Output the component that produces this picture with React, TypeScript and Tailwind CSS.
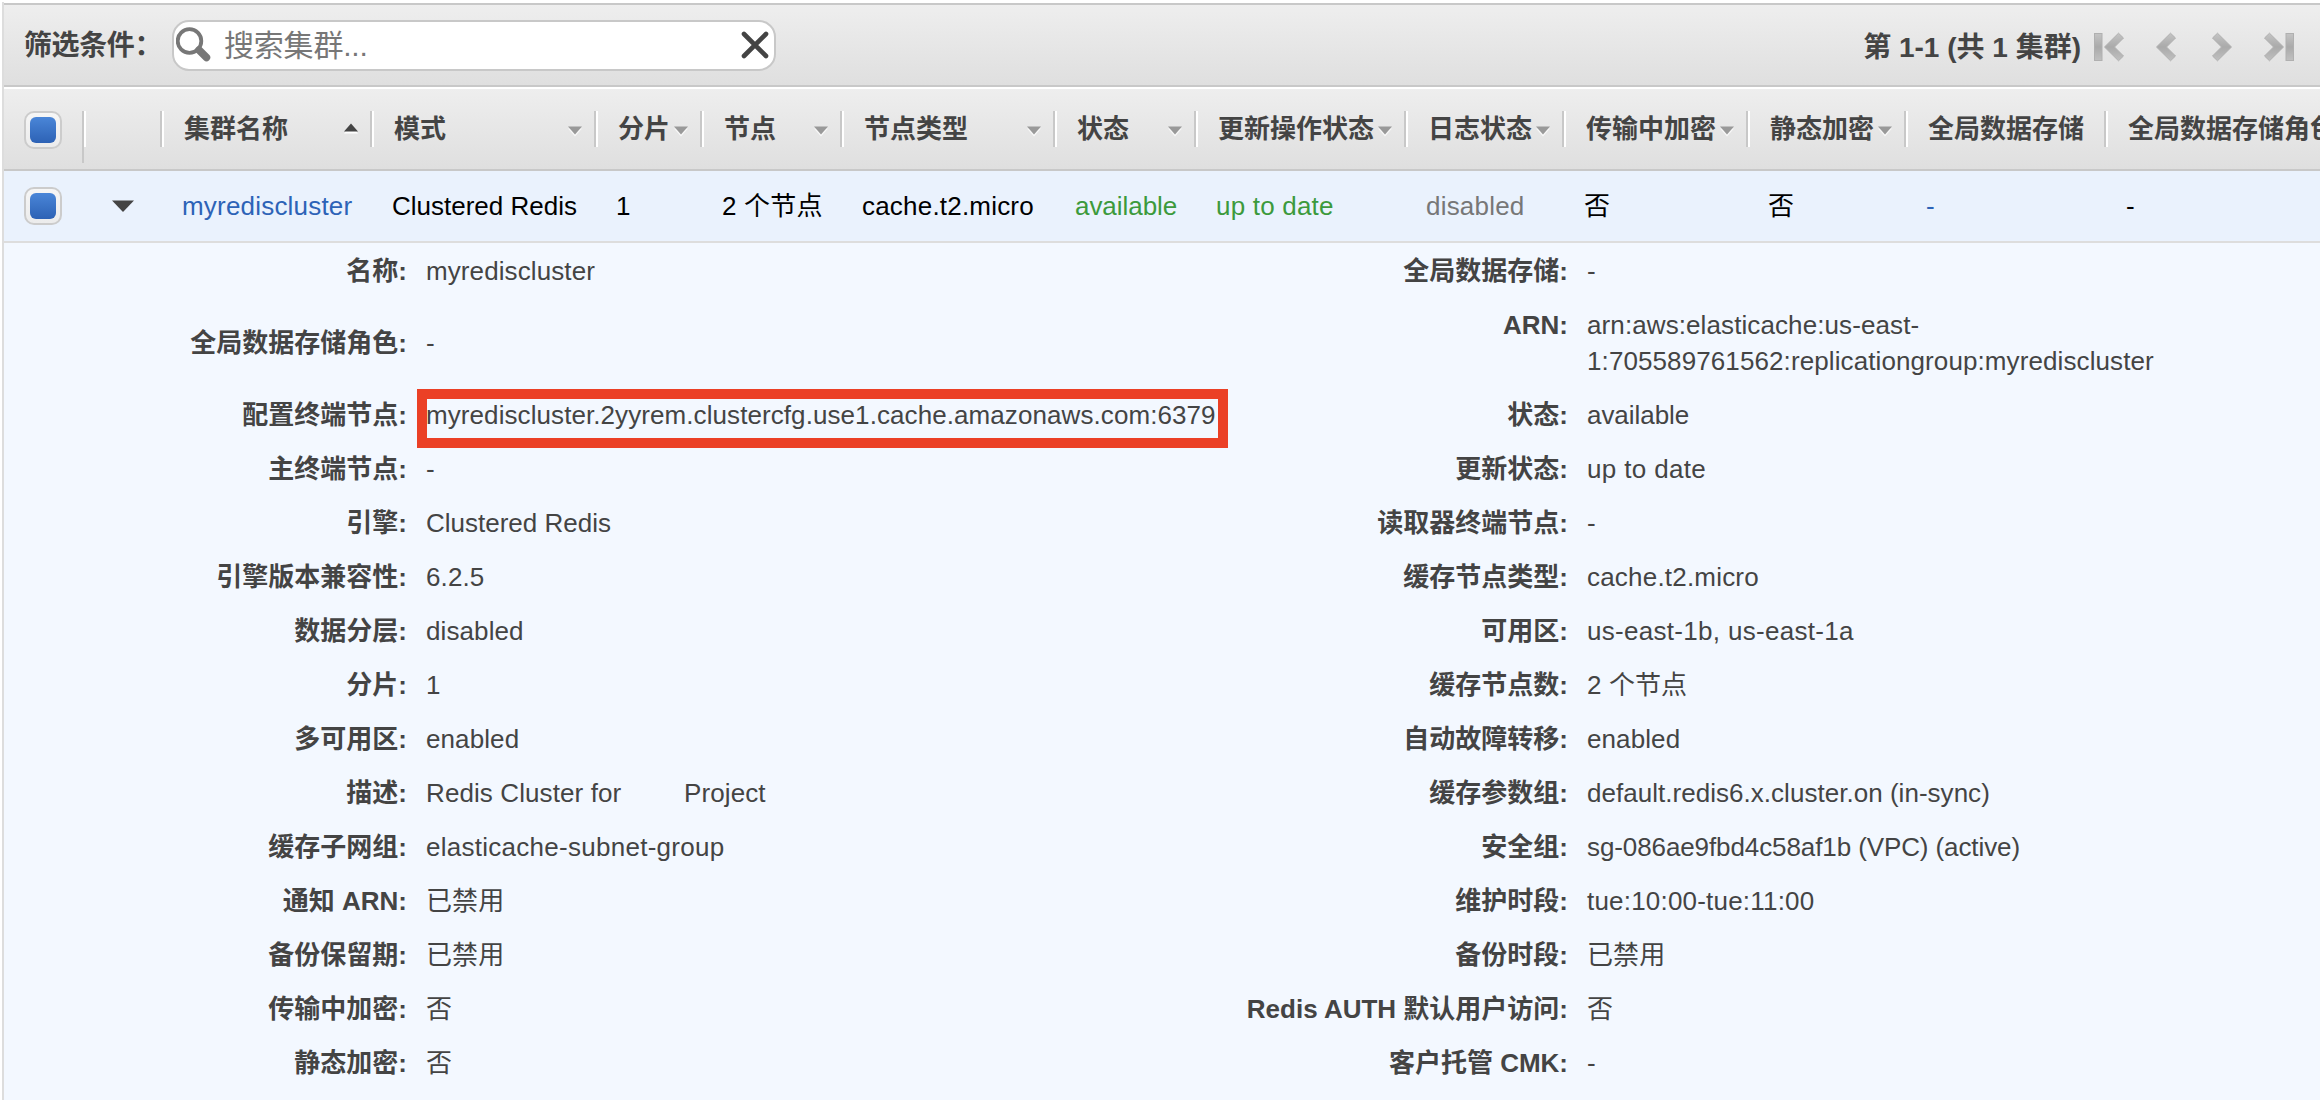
import React from "react";

type Column = {
  title: string;
  width: string;
  sort: "asc" | "none" | null;
  value: string;
  tone: string;
  tracking?: string;
};

const columns: Column[] = [
  { title: "集群名称", width: "w-[210px]", sort: "asc", value: "myrediscluster", tone: "text-[#2d63b7]" },
  { title: "模式", width: "w-[224px]", sort: "none", value: "Clustered Redis", tone: "text-black", tracking: "tracking-normal" },
  { title: "分片", width: "w-[106px]", sort: "none", value: "1", tone: "text-black" },
  { title: "节点", width: "w-[140px]", sort: "none", value: "2 个节点", tone: "text-black" },
  { title: "节点类型", width: "w-[213px]", sort: "none", value: "cache.t2.micro", tone: "text-black" },
  { title: "状态", width: "w-[141px]", sort: "none", value: "available", tone: "text-[#3c9a3c]", tracking: "tracking-[-0.05px]" },
  { title: "更新操作状态", width: "w-[210px]", sort: "none", value: "up to date", tone: "text-[#3c9a3c]" },
  { title: "日志状态", width: "w-[158px]", sort: "none", value: "disabled", tone: "text-[#777777]" },
  { title: "传输中加密", width: "w-[184px]", sort: "none", value: "否", tone: "text-black" },
  { title: "静态加密", width: "w-[158px]", sort: "none", value: "否", tone: "text-black" },
  { title: "全局数据存储", width: "w-[200px]", sort: null, value: "-", tone: "text-[#2d63b7]" },
  { title: "全局数据存储角色", width: "w-[260px]", sort: null, value: "-", tone: "text-black" },
];

type Detail = {
  label: string;
  value: React.ReactNode;
  tall?: "middle" | "top";
  marked?: boolean;
  tracking?: string;
};

const leftDetails: Detail[] = [
  { label: "名称:", value: "myrediscluster" },
  { label: "全局数据存储角色:", value: "-", tall: "middle" },
  {
    label: "配置终端节点:",
    value: "myrediscluster.2yyrem.clustercfg.use1.cache.amazonaws.com:6379",
    marked: true,
    tracking: "tracking-[0.08px]",
  },
  { label: "主终端节点:", value: "-" },
  { label: "引擎:", value: "Clustered Redis", tracking: "tracking-normal" },
  { label: "引擎版本兼容性:", value: "6.2.5" },
  { label: "数据分层:", value: "disabled" },
  { label: "分片:", value: "1" },
  { label: "多可用区:", value: "enabled" },
  {
    label: "描述:",
    value: (
      <span className="flex">
        <span className="w-[258px]">Redis Cluster for</span>
        <span>Project</span>
      </span>
    ),
  },
  { label: "缓存子网组:", value: "elasticache-subnet-group", tracking: "tracking-[0.27px]" },
  { label: "通知 ARN:", value: "已禁用" },
  { label: "备份保留期:", value: "已禁用" },
  { label: "传输中加密:", value: "否" },
  { label: "静态加密:", value: "否" },
];

const rightDetails: Detail[] = [
  { label: "全局数据存储:", value: "-" },
  {
    label: "ARN:",
    value: (
      <>
        arn:aws:elasticache:us-east-
        <br />
        1:705589761562:replicationgroup:myrediscluster
      </>
    ),
    tall: "top",
  },
  { label: "状态:", value: "available", tracking: "tracking-[-0.05px]" },
  { label: "更新状态:", value: "up to date", tracking: "tracking-[0.35px]" },
  { label: "读取器终端节点:", value: "-" },
  { label: "缓存节点类型:", value: "cache.t2.micro", tracking: "tracking-[0.2px]" },
  { label: "可用区:", value: "us-east-1b, us-east-1a", tracking: "tracking-[0.3px]" },
  { label: "缓存节点数:", value: "2 个节点" },
  { label: "自动故障转移:", value: "enabled" },
  { label: "缓存参数组:", value: "default.redis6.x.cluster.on (in-sync)", tracking: "tracking-[0.03px]" },
  { label: "安全组:", value: "sg-086ae9fbd4c58af1b (VPC) (active)", tracking: "tracking-[-0.1px]" },
  { label: "维护时段:", value: "tue:10:00-tue:11:00", tracking: "tracking-[0.2px]" },
  { label: "备份时段:", value: "已禁用" },
  { label: "Redis AUTH 默认用户访问:", value: "否" },
  { label: "客户托管 CMK:", value: "-" },
];

function Checkbox() {
  return (
    <div className="flex size-[38px] items-center justify-center rounded-[10px] border-2 border-[#cccccc] bg-gradient-to-b from-[#f6f6f6] to-[#ececec]">
      <div className="size-[26px] rounded-[6px] bg-gradient-to-b from-[#4a86d8] to-[#2d62b5]" />
    </div>
  );
}

function Separator() {
  return (
    <div className="flex h-9 shrink-0">
      <div className="w-0.5 bg-[#c8c8c8]" />
      <div className="w-0.5 bg-white" />
    </div>
  );
}

function SortArrow({ direction }: { direction: "asc" | "none" }) {
  return direction === "asc" ? (
    <svg className="mr-3 -mt-0.5 h-[11px] w-[14px] shrink-0" viewBox="0 0 14 11">
      <path d="M0 10.5 7 2.5 14 10.5z" fill="#fff" />
      <path d="M0 8.5 7 0.5 14 8.5z" fill="#444" />
    </svg>
  ) : (
    <svg className="mr-3 mt-1 h-[11px] w-[14px] shrink-0" viewBox="0 0 14 11">
      <path d="M0 2.5H14L7 10.5z" fill="#f8f8f8" />
      <path d="M0 0.5H14L7 8.5z" fill="#999" />
    </svg>
  );
}

function PageIcon({ kind }: { kind: "first" | "prev" | "next" | "last" }) {
  const forward = kind === "next" || kind === "last";
  const bar = kind === "first" || kind === "last";
  return (
    <svg className={bar ? "h-[30px] w-[32px]" : "h-[30px] w-[22px]"} viewBox={bar ? "0 0 32 30" : "10 0 22 30"}>
      <defs>
        <linearGradient id={"shade-" + kind} x1="0" y1="0" x2="0" y2="1">
          <stop offset="0" stopColor="#c4c4c4" />
          <stop offset="0.5" stopColor="#aaaaaa" />
          <stop offset="1" stopColor="#c0c0c0" />
        </linearGradient>
      </defs>
      <g
        transform={forward ? (bar ? "matrix(-1 0 0 1 32 0)" : "matrix(-1 0 0 1 42 0)") : undefined}
        fill={"url(#shade-" + kind + ")"}
        stroke="#b0b0b0"
        strokeWidth="1"
      >
        {bar && <rect x="1.5" y="1.5" width="7.5" height="27" />}
        <path d="M25.5 1.2 11.5 15 25.5 28.8 30.5 24 21.5 15 30.5 6z" />
      </g>
    </svg>
  );
}

function DetailRow({ item }: { item: Detail }) {
  const height = item.tall ? "h-[90px]" : "h-[54px]";
  const align = item.tall === "top" ? "items-start" : "items-center";
  const tracking = item.tracking ?? "tracking-[0.1px]";
  return (
    <div className={`flex py-[9px] leading-9 ${height} ${align}`}>
      <div className="w-[403px] shrink-0 text-right font-bold whitespace-nowrap">{item.label}</div>
      <div className={`relative ml-[19px] whitespace-nowrap ${tracking}`}>
        {item.value}
        {item.marked && (
          <div className="absolute -top-[8px] -left-[9px] h-[59px] w-[811px] border-[10px] border-[#eb4026]" />
        )}
      </div>
    </div>
  );
}

export default function App() {
  return (
    <div className="h-[1100px] w-[2320px] overflow-hidden bg-white pt-0.5 pl-0.5 font-['Liberation_Sans','Noto_Sans_CJK_SC',sans-serif] text-[26px] text-[#444444]">
      <div className="flex h-full flex-col border-l-2 border-[#dddddd] pt-px">
        <header className="flex h-[84px] shrink-0 items-center border-y-2 border-[#c8c8c8] bg-gradient-to-b from-[#eeeeee] to-[#dfdfdf]">
          <div className="w-[168px] shrink-0 pt-0.5 pl-5 text-[28px] font-bold tracking-[-0.4px] whitespace-nowrap">筛选条件：</div>
          <div className="flex h-[51px] w-[604px] items-center rounded-[17px] border-2 border-[#c8c8c8] bg-white pr-[5px] pl-0.5">
            <svg className="size-[36px]" viewBox="0 0 36 36" fill="none" stroke="#777">
              <circle cx="13.5" cy="14" r="11.8" strokeWidth="3.8" />
              <path d="M23 23 30.5 30.5" strokeWidth="7.5" strokeLinecap="round" />
            </svg>
            <div className="ml-3 flex-1 text-[30px] tracking-[-0.2px] text-[#777777]">搜索集群...</div>
            <svg className="size-[28px]" viewBox="0 0 28 28" stroke="#444" strokeWidth="4.6" strokeLinecap="round">
              <path d="M3 3 25 25M25 3 3 25" />
            </svg>
          </div>
          <div className="ml-auto flex items-center pt-1 pr-[25px]">
            <div className="mr-[12px] pt-0.5 text-[28px] font-bold whitespace-nowrap">第 1-1 (共 1 集群)</div>
            <div className="flex items-center">
              <PageIcon kind="first" />
              <div className="ml-[30px] flex"><PageIcon kind="prev" /></div>
              <div className="ml-[34px] flex"><PageIcon kind="next" /></div>
              <div className="ml-[30px] flex"><PageIcon kind="last" /></div>
            </div>
          </div>
        </header>

        <div className="flex h-[84px] shrink-0 items-start border-t-2 border-b-2 border-t-white border-b-[#c8c8c8] bg-gradient-to-b from-[#eeeeee] to-[#dfdfdf] pt-[22px]">
          <div className="w-[78px] shrink-0 pl-5"><Checkbox /></div>
          <div className="flex w-[78px] shrink-0">
            <div className="h-[52px] w-0.5 bg-[#c8c8c8]" />
            <div className="h-9 w-0.5 bg-white" />
          </div>
          {columns.map((c) => (
            <div key={c.title} className={`flex h-9 shrink-0 items-center ${c.width}`}>
              <Separator />
              <div className="ml-5 flex-1 font-bold whitespace-nowrap">{c.title}</div>
              {c.sort && <SortArrow direction={c.sort} />}
            </div>
          ))}
        </div>

        <div className="flex h-[72px] shrink-0 items-center border-b-2 border-[#dddddd] bg-[#eaf2fd]">
          <div className="w-[108px] shrink-0 pl-5"><Checkbox /></div>
          <div className="w-[48px] shrink-0">
            <svg className="h-[12px] w-[22px]" viewBox="0 0 22 12">
              <path d="M0 0.5H22L11 12z" fill="#444" />
            </svg>
          </div>
          {columns.map((c) => (
            <div
              key={c.title}
              className={`shrink-0 pl-[22px] whitespace-nowrap ${c.width} ${c.tone} ${c.tracking ?? "tracking-[0.2px]"}`}
            >
              {c.value}
            </div>
          ))}
        </div>

        <div className="flex flex-1 overflow-hidden bg-[#f3f8ff] pt-px">
          <div className="w-[1161px] shrink-0">
            {leftDetails.map((d) => (
              <DetailRow key={d.label} item={d} />
            ))}
          </div>
          <div className="w-[1155px] shrink-0">
            {rightDetails.map((d) => (
              <DetailRow key={d.label} item={d} />
            ))}
          </div>
        </div>
      </div>
    </div>
  );
}
